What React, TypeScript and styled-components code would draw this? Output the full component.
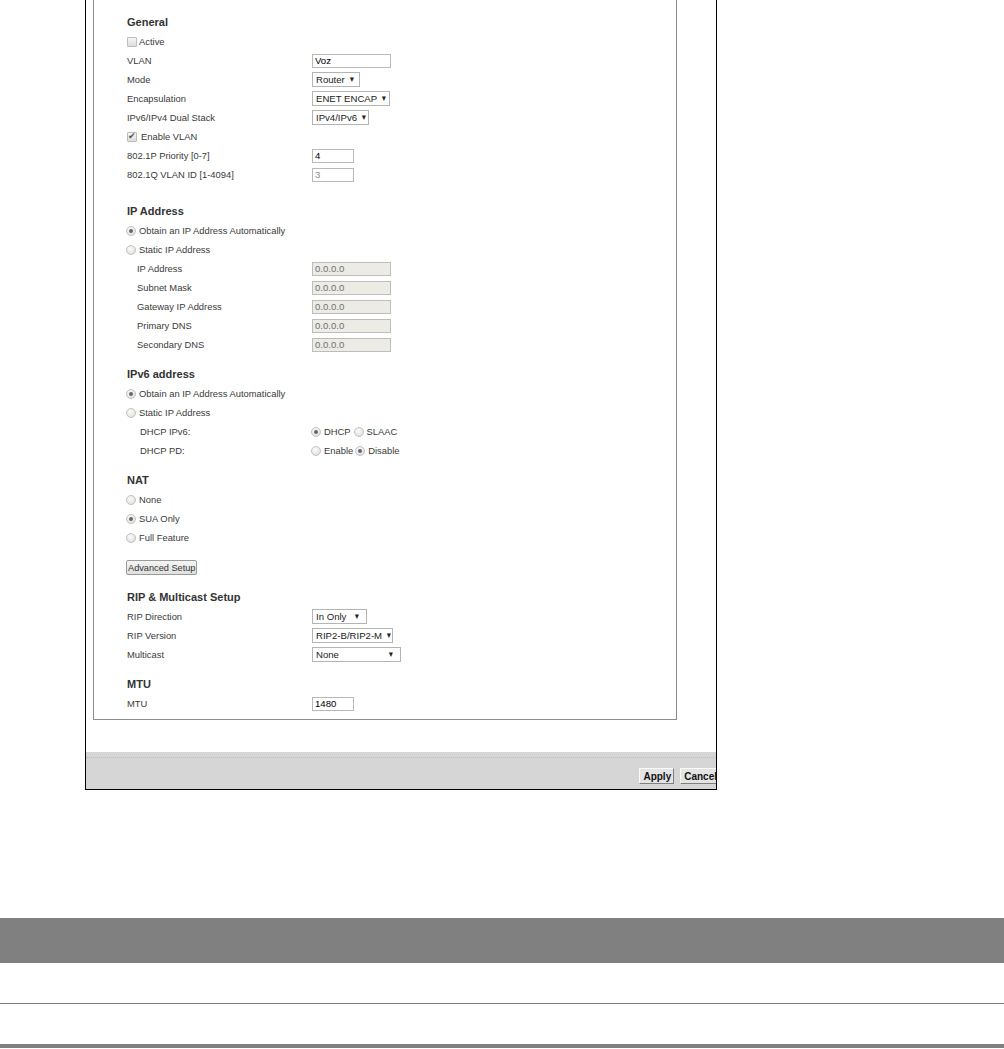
import styled, { createGlobalStyle } from 'styled-components';

const GlobalStyle = createGlobalStyle`
  html, body {
    margin: 0;
    padding: 0;
    background: #fff;
  }
  body {
    font-family: "Liberation Sans", Arial, sans-serif;
  }
`;

const Page = styled.div`
  width: 1004px;
  height: 1049px;
  overflow: hidden;
  display: flex;
  flex-direction: column;
`;

const Frame = styled.div`
  margin-left: 85px;
  width: 632px;
  box-sizing: border-box;
  border: 1px solid #000;
  border-top: none;
  overflow: hidden;
  display: flex;
  flex-direction: column;
`;

const Panel = styled.div`
  margin-left: 7px;
  width: 584px;
  height: 720px;
  box-sizing: border-box;
  border: 1px solid #8c8c8c;
  border-top: none;
  padding: 13px 0 0 33px;
  background: #fff;
`;

const Section = styled.div<{ $top?: number }>`
  margin-top: ${({ $top }) => $top ?? 11}px;
  &:first-child {
    margin-top: 0;
  }
`;

const SectionTitle = styled.div`
  height: 19px;
  line-height: 19px;
  font-size: 11px;
  font-weight: bold;
  color: #333;
`;

const Row = styled.div`
  display: grid;
  grid-template-columns: 185px 1fr;
  height: 19px;
  align-items: center;
`;

const Label = styled.div<{ $indent?: number }>`
  padding-left: ${({ $indent }) => $indent ?? 0}px;
  font-size: 9.4px;
  color: #3a3a3a;
  white-space: nowrap;
`;

const Controls = styled.div`
  display: flex;
  align-items: center;
  font-size: 9.4px;
  color: #3a3a3a;
`;

const TextInput = styled.input<{ $w: number; $muted?: boolean }>`
  box-sizing: border-box;
  width: ${({ $w }) => $w}px;
  height: 14px;
  margin: 0;
  border: 1px solid #b9b9b9;
  padding: 0 2px;
  font: 9.6px "Liberation Sans", Arial, sans-serif;
  color: ${({ $muted }) => ($muted ? '#8a8a8a' : '#000')};
  background: #fff;
  outline: none;

  &:disabled {
    background: #ecebe6;
    color: #707070;
    border-color: #bdbdbd;
  }
`;

const SelectBox = styled.div<{ $w: number }>`
  box-sizing: border-box;
  width: ${({ $w }) => $w}px;
  height: 15px;
  border: 1px solid #b4b4b4;
  background: #fff;
  display: flex;
  align-items: center;
  justify-content: space-between;
  padding: 0 5px 0 3px;
  font-size: 9.6px;
  color: #222;
  white-space: nowrap;
  overflow: hidden;

  &::after {
    content: '▼';
    font-size: 8px;
    transform: scaleX(0.85);
    color: #222;
    margin-left: 3px;
  }
`;

const Choice = styled.label<{ $gap?: number }>`
  display: inline-flex;
  align-items: center;
  font-size: 9.4px;
  color: #3a3a3a;
  margin-right: ${({ $gap }) => $gap ?? 0}px;
`;

const RadioDot = styled.span<{ $on?: boolean }>`
  width: 10px;
  height: 10px;
  box-sizing: border-box;
  border-radius: 50%;
  border: 1px solid #c2c2c2;
  background: radial-gradient(circle at 40% 35%, #fbfbfb 0%, #e8e8e8 60%, #d6d6d6 100%);
  display: inline-flex;
  align-items: center;
  justify-content: center;
  margin-right: 3px;
  margin-left: -1px;

  &::after {
    content: '';
    width: 4px;
    height: 4px;
    border-radius: 50%;
    background: #666;
    display: ${({ $on }) => ($on ? 'block' : 'none')};
  }
`;

const CheckBox = styled.span<{ $on?: boolean }>`
  width: 10px;
  height: 10px;
  box-sizing: border-box;
  border: 1px solid #bcbcbc;
  border-radius: 1px;
  background: linear-gradient(#f6f6f6, #dcdcdc);
  display: inline-flex;
  align-items: center;
  justify-content: center;
  margin-right: ${({ $on }) => ($on ? 4 : 2)}px;
  font-size: 9px;
  line-height: 1;
  color: #555;
`;

const PlainButton = styled.button`
  box-sizing: border-box;
  height: 15px;
  margin: 0 0 0 -1px;
  padding: 0 1px;
  border: 1px solid #9a9a9a;
  border-radius: 2px;
  background: linear-gradient(#f4f4f4, #e0e0e0);
  font: 9.2px "Liberation Sans", Arial, sans-serif;
  color: #333;
`;

const ButtonRow = styled.div`
  height: 19px;
  display: flex;
  align-items: center;
`;

const BottomBar = styled.div`
  margin-top: 32px;
  height: 37px;
  background: #d6d6d6;
  padding-top: 5px;
  box-sizing: border-box;
  display: flex;
  flex-direction: column;
`;

const Dots = styled.div`
  border-top: 1px dotted #bdbdbd;
`;

const ActionRow = styled.div`
  margin-top: 10px;
  display: flex;
  justify-content: flex-end;
  gap: 6px;
  margin-right: -4px;
`;

const ActionButton = styled.button`
  box-sizing: border-box;
  height: 16px;
  margin: 0;
  padding: 0 2px 0 3px;
  border: 1px solid;
  border-color: #fafafa #808080 #808080 #fafafa;
  background: #e4e4e4;
  font: bold 10px "Liberation Sans", Arial, sans-serif;
  color: #111;
`;

const Table = styled.table`
  margin-top: 128px;
  width: 1004px;
  border-collapse: collapse;
  border-bottom: 4px solid #808080;
`;

const HeadCell = styled.th`
  height: 45px;
  padding: 0;
  background: #808080;
`;

const BodyCell = styled.td<{ $line?: boolean }>`
  height: 40px;
  padding: 0;
  border-top: ${({ $line }) => ($line ? '1px solid #7f7f7f' : 'none')};
`;

type Field = { label: string; indent?: number; control: React.ReactNode };

const Radio = ({ on, text, gap }: { on?: boolean; text: string; gap?: number }) => (
  <Choice $gap={gap}>
    <RadioDot $on={on} />
    {text}
  </Choice>
);

const Check = ({ on, text }: { on?: boolean; text: string }) => (
  <Choice>
    <CheckBox $on={on}>{on ? '✔' : ''}</CheckBox>
    {text}
  </Choice>
);

const FieldRow = ({ label, indent, control }: Field) => (
  <Row>
    <Label $indent={indent}>{label}</Label>
    <Controls>{control}</Controls>
  </Row>
);

const ChoiceRow = ({ children }: { children: React.ReactNode }) => <Row>{children}</Row>;

const ipFields = ['IP Address', 'Subnet Mask', 'Gateway IP Address', 'Primary DNS', 'Secondary DNS'];

export default function App() {
  return (
    <Page>
      <GlobalStyle />
      <Frame>
        <Panel>
          <Section>
            <SectionTitle>General</SectionTitle>
            <ChoiceRow>
              <Check text="Active" />
            </ChoiceRow>
            <FieldRow label="VLAN" control={<TextInput $w={79} defaultValue="Voz" />} />
            <FieldRow label="Mode" control={<SelectBox $w={48}>Router</SelectBox>} />
            <FieldRow label="Encapsulation" control={<SelectBox $w={78}>ENET ENCAP</SelectBox>} />
            <FieldRow label="IPv6/IPv4 Dual Stack" control={<SelectBox $w={57}>IPv4/IPv6</SelectBox>} />
            <ChoiceRow>
              <Check on text="Enable VLAN" />
            </ChoiceRow>
            <FieldRow label="802.1P Priority [0-7]" control={<TextInput $w={42} defaultValue="4" />} />
            <FieldRow label="802.1Q VLAN ID [1-4094]" control={<TextInput $w={42} $muted readOnly defaultValue="3" />} />
          </Section>

          <Section $top={18}>
            <SectionTitle>IP Address</SectionTitle>
            <ChoiceRow>
              <Radio on text="Obtain an IP Address Automatically" />
            </ChoiceRow>
            <ChoiceRow>
              <Radio text="Static IP Address" />
            </ChoiceRow>
            {ipFields.map((f) => (
              <FieldRow key={f} label={f} indent={10} control={<TextInput $w={79} disabled defaultValue="0.0.0.0" />} />
            ))}
          </Section>

          <Section>
            <SectionTitle>IPv6 address</SectionTitle>
            <ChoiceRow>
              <Radio on text="Obtain an IP Address Automatically" />
            </ChoiceRow>
            <ChoiceRow>
              <Radio text="Static IP Address" />
            </ChoiceRow>
            <FieldRow
              label="DHCP IPv6:"
              indent={13}
              control={
                <>
                  <Radio on text="DHCP" gap={4} />
                  <Radio text="SLAAC" />
                </>
              }
            />
            <FieldRow
              label="DHCP PD:"
              indent={13}
              control={
                <>
                  <Radio text="Enable" gap={3} />
                  <Radio on text="Disable" />
                </>
              }
            />
          </Section>

          <Section>
            <SectionTitle>NAT</SectionTitle>
            <ChoiceRow>
              <Radio text="None" />
            </ChoiceRow>
            <ChoiceRow>
              <Radio on text="SUA Only" />
            </ChoiceRow>
            <ChoiceRow>
              <Radio text="Full Feature" />
            </ChoiceRow>
          </Section>

          <Section>
            <ButtonRow>
              <PlainButton type="button">Advanced Setup</PlainButton>
            </ButtonRow>
          </Section>

          <Section>
            <SectionTitle>RIP &amp; Multicast Setup</SectionTitle>
            <FieldRow label="RIP Direction" control={<SelectBox $w={55}>In Only</SelectBox>} />
            <FieldRow label="RIP Version" control={<SelectBox $w={81}>RIP2-B/RIP2-M</SelectBox>} />
            <FieldRow label="Multicast" control={<SelectBox $w={89}>None</SelectBox>} />
          </Section>

          <Section>
            <SectionTitle>MTU</SectionTitle>
            <FieldRow label="MTU" control={<TextInput $w={42} defaultValue="1480" />} />
          </Section>
        </Panel>

        <BottomBar>
          <Dots />
          <ActionRow>
            <ActionButton type="button">Apply</ActionButton>
            <ActionButton type="button">Cancel</ActionButton>
          </ActionRow>
        </BottomBar>
      </Frame>

      <Table>
        <thead>
          <tr>
            <HeadCell />
          </tr>
        </thead>
        <tbody>
          <tr>
            <BodyCell />
          </tr>
          <tr>
            <BodyCell $line />
          </tr>
        </tbody>
      </Table>
    </Page>
  );
}
